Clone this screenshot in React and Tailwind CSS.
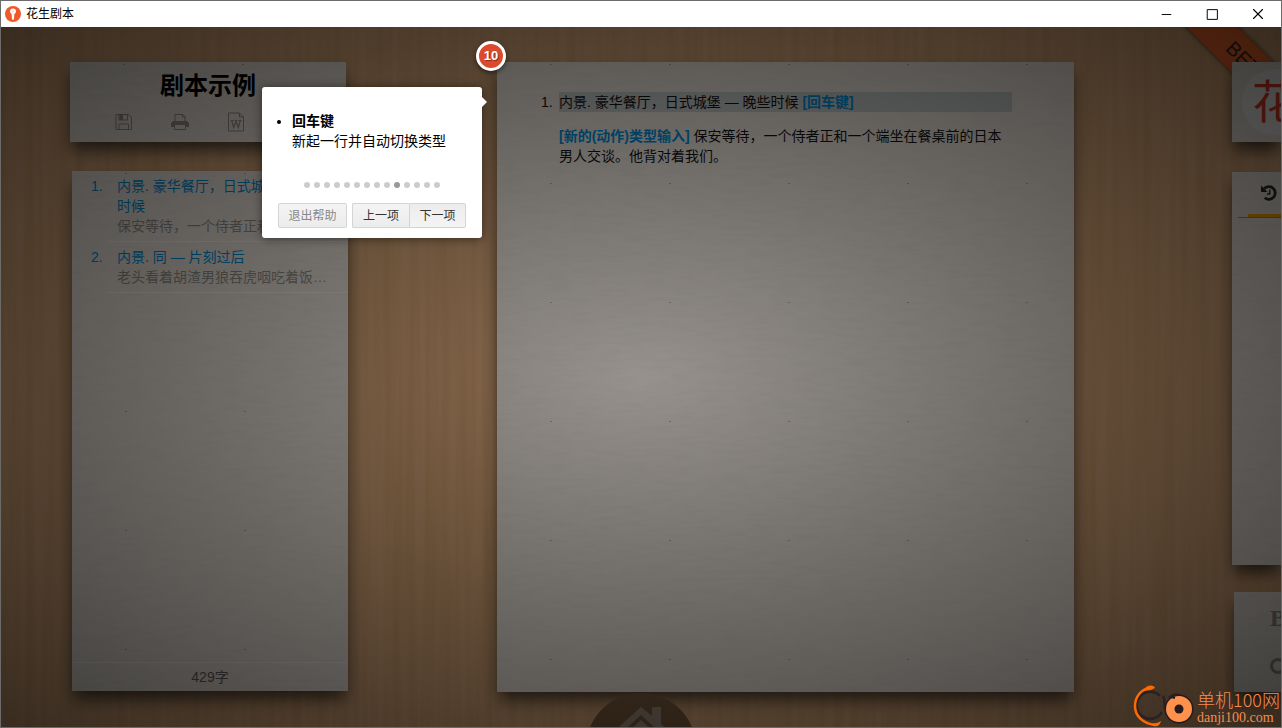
import { useId, useState } from "react";
import { Minus, Square, X } from "lucide-react";

const scenes = [
  {
    title: "内景. 豪华餐厅，日式城堡 — 晚些时候",
    text: "保安等待，一个侍者正和一个端坐在餐桌前的日本男人交谈。",
  },
  {
    title: "内景. 同 — 片刻过后",
    text: "老头看着胡渣男狼吞虎咽吃着饭，他慢慢放下手里的杯子。",
  },
];

const STEPS = 14;

function WoodGrain() {
  return (
    <svg className="absolute inset-0 w-full h-full opacity-35" aria-hidden="true">
      <filter id="grain" x="0" y="0" width="100%" height="100%">
        <feTurbulence type="fractalNoise" baseFrequency="0.12 0.003" numOctaves="3" seed="4" />
        <feColorMatrix values="0 0 0 0 0.42  0 0 0 0 0.22  0 0 0 0 0.06  1.6 0 0 0 -0.45" />
      </filter>
      <rect width="100%" height="100%" filter="url(#grain)" />
    </svg>
  );
}

function Paper({ className = "", children }) {
  const id = useId();
  return (
    <section
      className={`relative bg-[#ded7cf] shadow-[0_10px_16px_-2px_rgba(0,0,0,0.65)] ${className}`}
    >
      <svg className="absolute inset-0 w-full h-full" aria-hidden="true">
        <defs>
          <filter id={`${id}-f`} x="0" y="0" width="100%" height="100%">
            <feTurbulence type="fractalNoise" baseFrequency="0.04 0.25" numOctaves="2" seed="9" />
            <feColorMatrix values="0 0 0 0 0.3  0 0 0 0 0.3  0 0 0 0 0.3  0.5 0 0 0 -0.2" />
          </filter>
          <pattern id={`${id}-p`} width="119" height="119" patternUnits="userSpaceOnUse">
            <rect x="53" y="2" width="2" height="1" fill="#a8a29b" />
          </pattern>
        </defs>
        <rect width="100%" height="100%" filter={`url(#${id}-f)`} opacity="0.3" />
        <rect width="100%" height="100%" fill={`url(#${id}-p)`} />
      </svg>
      {children}
    </section>
  );
}

function PeanutLogo() {
  return (
    <svg viewBox="0 0 16 16" className="w-4 h-4" aria-hidden="true">
      <circle cx="8" cy="8" r="8" fill="#f0592a" />
      <path
        d="M8 2.400c-1.900 0-3 1.300-3 2.800 0 1.200.6 1.900 1.300 2.500.4.4.4.8.4 1.500l.3 3.600c0 .6.4 1 1 1s1-.4 1-1l.3-3.600c0-.7 0-1.100.4-1.500.7-.6 1.300-1.300 1.300-2.500 0-1.500-1.100-2.800-3-2.800z"
        fill="#fff"
      />
      <path d="M7 5.200h2M7.300 7h1.400" stroke="#f5b79f" strokeWidth="0.700" />
    </svg>
  );
}

function SaveIcon() {
  return (
    <svg viewBox="0 0 18 18" className="w-[18px] h-[18px]" fill="none" stroke="currentColor">
      <path d="M1 1.500h12.500l3 3v12H1z" />
      <path d="M4 2v5h8.500V2" />
      <path d="M5 2h2.500v4.500H5z" fill="currentColor" />
      <path d="M4 16.500V11h9.500v5.500" />
    </svg>
  );
}

function PrintIcon() {
  return (
    <svg viewBox="0 0 18 18" className="w-[18px] h-[18px]" fill="none" stroke="currentColor">
      <path d="M4 8V1.500h8l2 2V8" />
      <path d="M11.500 1.500V4H14" />
      <path d="M0.500 13.500V10L2 8.500h14l1.500 1.500v3.500h-3v-2h-11v2z" fill="currentColor" />
      <path d="M3.500 11.500h11v5h-11z" />
    </svg>
  );
}

function WordIcon() {
  return (
    <svg viewBox="0 0 18 20" className="w-[18px] h-5" fill="none" stroke="currentColor">
      <path d="M1.500 1h11l4 4v14h-15z" />
      <path d="M12.500 1v4h4" />
      <path d="M3.500 8.500h3M11.500 8.500h3M7.500 8.500h3M4.700 8.500l2 7L9 9l2.300 6.500 2-7" strokeWidth="1.200" />
    </svg>
  );
}

function PdfIcon() {
  return (
    <svg viewBox="0 0 18 20" className="w-[18px] h-5" fill="none" stroke="currentColor">
      <path d="M1.500 1h11l4 4v14h-15z" />
      <path d="M12.500 1v4h4M5 15c2-1 4-5 3.500-8 0 3 2 5 4.500 5.500-3 0-6 1-8 2.500z" />
    </svg>
  );
}

function HistoryIcon() {
  return (
    <svg viewBox="0 0 18 18" className="w-[18px] h-[18px]" fill="none" stroke="currentColor">
      <path d="M4.200 4.800A6.300 6.300 0 1 1 4.800 13.800" strokeWidth="2.800" />
      <path d="M1 1.500v6.500h6.500z" fill="currentColor" stroke="none" />
      <path d="M9.800 5.500v4.500H7" strokeWidth="1.400" />
    </svg>
  );
}

const tools = [
  { label: "保存", Icon: SaveIcon },
  { label: "打印", Icon: PrintIcon },
  { label: "导出 Word", Icon: WordIcon },
  { label: "导出 PDF", Icon: PdfIcon },
];

function TitleBar() {
  return (
    <header className="h-[26px] shrink-0 flex items-center bg-white text-black">
      <div className="flex items-center gap-[5px] pl-1 text-xs">
        <PeanutLogo />
        <span>花生剧本</span>
      </div>
      <div className="ml-auto flex h-full">
        <button aria-label="最小化" className="w-[46px] grid place-items-center">
          <Minus size={15} strokeWidth={1.5} />
        </button>
        <button aria-label="最大化" className="w-[46px] grid place-items-center">
          <Square size={13} strokeWidth={1.8} className="[&>rect]:[rx:0]" />
        </button>
        <button aria-label="关闭" className="w-[46px] grid place-items-center">
          <X size={18} strokeWidth={1.5} />
        </button>
      </div>
    </header>
  );
}

function Sidebar() {
  return (
    <aside className="w-[278px] shrink-0 flex flex-col gap-[29px]">
      <Paper className="h-20 mr-0.5">
        <div className="relative pt-2 text-center">
          <h1 className="text-2xl leading-8 font-bold text-black">剧本示例</h1>
          <div className="flex justify-center text-[#8f8b86]">
            {tools.map(({ label, Icon }) => (
              <button key={label} aria-label={label} className="w-14 h-10 grid place-items-center">
                <Icon />
              </button>
            ))}
          </div>
        </div>
      </Paper>

      <Paper className="flex-1 ml-0.5 mb-px flex flex-col">
        <ol className="relative flex-1">
          {scenes.map((scene, i) => (
            <li key={scene.title} className="flex text-[#0086cc]">
              <span className="w-[35px] pl-[19px] py-[5px]">{i + 1}.</span>
              <div className="flex-1 min-w-0 py-[5px] pl-2.5 pr-4 border-b border-[#e9e6e2]">
                <a href="#scene" className="block">{scene.title}</a>
                <p className="truncate text-[#8c8883]">{scene.text}</p>
              </div>
            </li>
          ))}
        </ol>
        <footer className="relative h-[29px] pt-1 border-t border-[#e9e6e2] text-center text-[#625c60]">
          429字
        </footer>
      </Paper>
    </aside>
  );
}

function Script() {
  return (
    <Paper className="flex-1 min-w-0">
      <div className="relative pt-[30px] px-[62px] text-[#111]">
        <div className="flex">
          <span className="w-[18px] -ml-[18px] shrink-0">1.</span>
          <p className="flex-1 bg-[#b9bbbb]">
            内景. 豪华餐厅，日式城堡 — 晚些时候 <b className="text-[#0086cc]">[回车键]</b>
          </p>
        </div>
        <p className="mt-3.5">
          <b className="text-[#0086cc]">[新的(动作)类型输入]</b>{" "}
          保安等待，一个侍者正和一个端坐在餐桌前的日本男人交谈。他背对着我们。
        </p>
      </div>
    </Paper>
  );
}

function RightPanel() {
  return (
    <aside className="w-[49px] shrink-0 flex flex-col">
      <Paper className="h-20 overflow-hidden">
        <div className="relative mt-[7px] ml-2.5 w-[66px] h-[66px] rounded-full bg-[#e6e3e2] grid place-items-center text-[46px] leading-none text-[#d63a26]">
          花
        </div>
      </Paper>
      <Paper className="mt-[30px] flex-1 overflow-hidden">
        <div className="relative ml-1.5 border-b border-[#8c8883]">
          <button
            aria-label="历史"
            className="block ml-2.5 w-20 h-[45px] pl-3 border-b-3 border-[#f0a000] text-[#2a2a2a]"
          >
            <HistoryIcon />
          </button>
        </div>
      </Paper>
      <Paper className="mt-[27px] ml-0.5 h-[100px] overflow-hidden">
        <div className="relative w-16 pl-9 pt-3 flex flex-col gap-[26px] text-[#8c8883]">
          <button
            aria-label="粗体"
            className="text-left font-['Liberation_Serif',serif] font-bold text-2xl leading-7"
          >
            B
          </button>
          <button aria-label="搜索" className="w-4 h-4 rounded-full border-3 border-current" />
        </div>
      </Paper>
    </aside>
  );
}

function HelpTip() {
  const [step, setStep] = useState(9);

  return (
    <div className="absolute left-[261px] top-[60px] w-[220px] rounded-[3px] bg-white text-black shadow-[0_1px_10px_rgba(0,0,0,0.5)]">
      <span className="absolute -right-[5px] top-2.5 border-y-[5px] border-y-transparent border-l-[5px] border-l-white" />
      <ul className="pt-6 pl-[30px] list-disc">
        <li>
          <b>回车键</b>
          <br />
          新起一行并自动切换类型
        </li>
      </ul>
      <div className="mt-[31px] flex justify-center gap-1">
        {Array.from({ length: STEPS }, (_, i) => (
          <button
            key={i}
            aria-label={`第${i + 1}项`}
            onClick={() => setStep(i)}
            className={`w-1.5 h-1.5 rounded-full ${i === step ? "bg-[#999]" : "bg-[#ccc]"}`}
          />
        ))}
      </div>
      <div className="flex px-4 pt-[15px] pb-2.5 text-xs text-[#333]">
        <button className="h-[25px] w-[69px] mr-[5px] border border-[#d4d4d4] rounded-xs bg-linear-to-b from-[#f4f4f4] to-[#ececec] text-[#888]">
          退出帮助
        </button>
        <button
          onClick={() => setStep(Math.max(0, step - 1))}
          className="h-[25px] w-[57px] border border-r-0 border-[#d4d4d4] rounded-l-xs bg-linear-to-b from-[#f4f4f4] to-[#ececec]"
        >
          上一项
        </button>
        <button
          onClick={() => setStep(Math.min(STEPS - 1, step + 1))}
          className="h-[25px] w-[57px] border border-[#d4d4d4] rounded-r-xs bg-linear-to-b from-[#ececec] to-[#f4f4f4]"
        >
          下一项
        </button>
      </div>
    </div>
  );
}

function Watermark() {
  return (
    <div className="absolute right-0 bottom-0 flex items-end gap-0.5 text-[#f58c4e]">
      <svg viewBox="0 0 62 42" className="w-[62px] h-[42px]" fill="none" aria-hidden="true">
        <path d="M27 11A13.500 13.500 0 1 0 29 27" stroke="#2b2023" strokeWidth="2.500" />
        <path d="M30 11c2 3 1 8 2 13M50 12c-5-4-11-3-14 1" stroke="#2b2023" strokeWidth="2.500" />
        <path d="M17 3C8 4 2 12 2 21c0 10 8 18 21 19" stroke="#ff6a00" strokeWidth="2.500" />
        <path d="M10 6c3-6 10-7 12-3l-4 2zM17 38c4 1 8 0 11-2-1 5-5 6-8 5z" fill="#ff6a00" />
        <path d="M18 15v10M13 20h10" stroke="#44342c" strokeWidth="2" />
        <circle cx="46" cy="24" r="14.500" fill="#251b1d" />
        <circle cx="46" cy="24" r="13" fill="#ff914d" />
        <circle cx="46" cy="24" r="4.500" fill="#251b1d" />
        <path d="M38 12l4 1" stroke="#251b1d" strokeWidth="2" />
      </svg>
      <div className="w-[84px] whitespace-nowrap">
        <div className="text-lg leading-5 font-['Noto_Sans_CJK_SC',sans-serif] font-light">单机100网</div>
        <div className="text-sm leading-[18px] font-['Liberation_Serif',serif]">danji100.com</div>
      </div>
    </div>
  );
}

export default function App() {
  return (
    <div className="h-screen flex flex-col border border-[#6d6b69] overflow-hidden text-sm leading-5 font-['Liberation_Sans','Noto_Sans_CJK_SC',sans-serif]">
      <TitleBar />
      <main className="relative flex-1 min-h-0 flex overflow-hidden bg-[#d0a177]">
        <WoodGrain />
        <div className="absolute -right-[64px] top-[20px] w-[190px] h-9 rotate-45 bg-[#f0642a] shadow-[0_0_5px_rgba(0,0,0,0.7)] pl-[66px] text-xl leading-9 text-[#30261f]">
          BETA
        </div>
        <div className="relative flex-1 min-w-0 flex pt-[35px] pb-[35px] pl-[69px]">
          <Sidebar />
          <div className="w-[149px] shrink-0" />
          <Script />
          <div className="w-[158px] shrink-0" />
          <RightPanel />
        </div>
        <a
          href="#home"
          aria-label="主页"
          className="absolute left-1/2 -translate-x-1/2 -bottom-[76px] w-[110px] h-[110px] rounded-full bg-[#745538]"
        >
          <svg viewBox="0 0 110 110" className="w-full h-full" fill="#978676">
            <path d="M55 14l11 9V14h9v17l20 19-4 5-36-33-36 33-4-5z" />
            <path d="M55 27l30 28v38H25V55z" />
          </svg>
        </a>
        <div className="absolute inset-0 bg-[radial-gradient(ellipse_at_center,rgba(0,0,0,0.32)_0%,rgba(0,0,0,0.72)_100%)]" />
        <HelpTip />
        <span className="absolute left-[475px] top-3.5 w-[30px] h-[30px] rounded-full border-3 border-white bg-[#dc4a2e] shadow-[0_2px_4px_rgba(0,0,0,0.5)] text-center text-[13px] leading-6 font-bold text-white [text-shadow:1px_1px_1px_rgba(0,0,0,0.4)]">
          10
        </span>
        <Watermark />
      </main>
    </div>
  );
}
